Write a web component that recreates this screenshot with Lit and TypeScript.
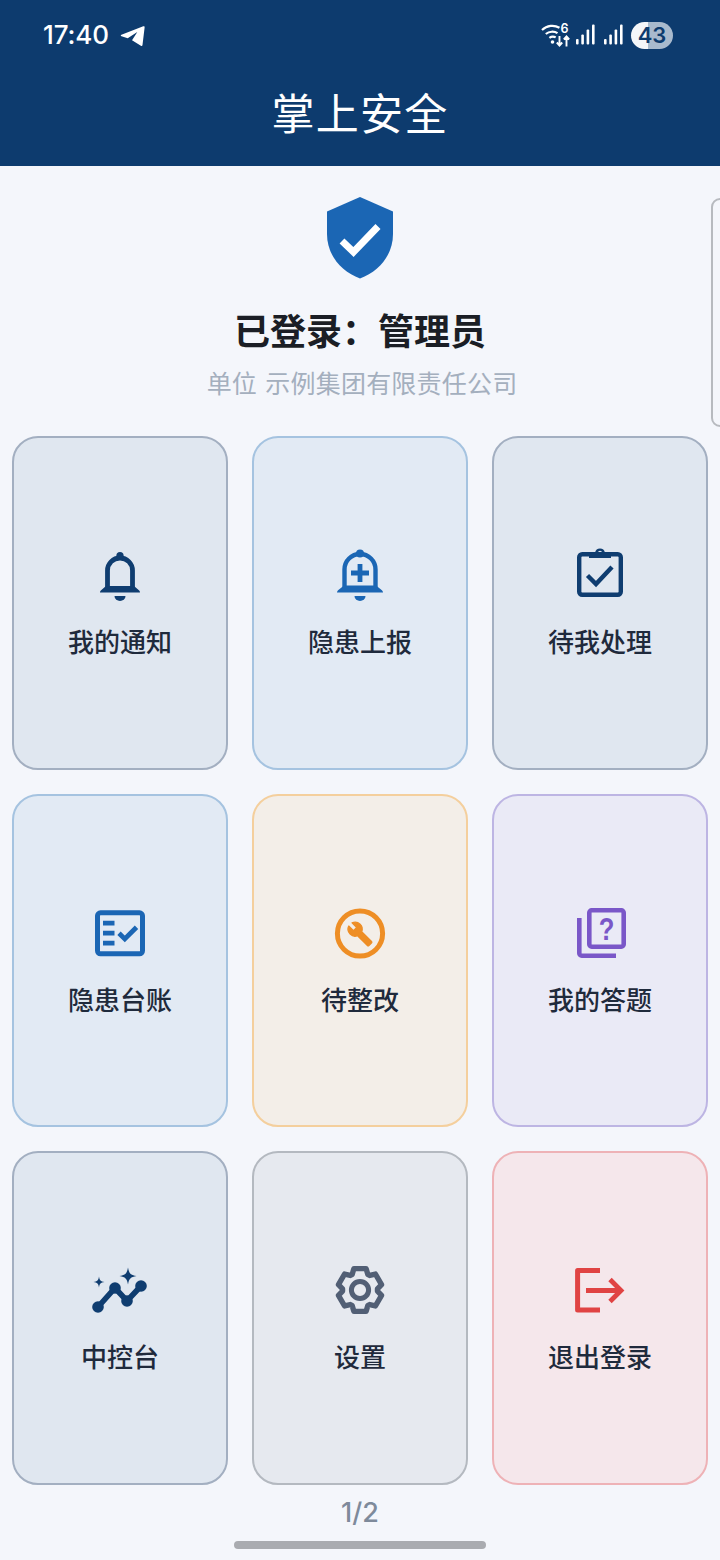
import { LitElement, html, css, svg } from "lit";
import { customElement } from "lit/decorators.js";

function gearPath(cx: number, cy: number): string {
  const pts: string[] = [];
  const teeth = 6;
  const step = (Math.PI * 2) / teeth;
  for (let i = 0; i < teeth; i++) {
    const a = -Math.PI / 2 + i * step;
    const p = (r: number, d: number) => {
      const t = a + d;
      return `${(cx + r * Math.cos(t)).toFixed(2)} ${(cy + r * Math.sin(t)).toFixed(2)}`;
    };
    pts.push(p(17.5, -0.46), p(22.2, -0.28), p(22.2, 0.28), p(17.5, 0.46));
  }
  return "M" + pts.join("L") + "Z";
}

const icons: Record<string, unknown> = {
  bell: svg`<g transform="translate(0 1)"><path d="M17.5 42V24.5a12.5 12.5 0 0 1 25 0V42" fill="none" stroke="currentColor" stroke-width="4.8"/>
    <circle cx="30" cy="9.5" r="3.6" fill="currentColor"/>
    <path d="M10 46.5c0-1 .6-1.7 1.4-2.4L16 40h28l4.6 4.1c.8.7 1.4 1.4 1.4 2.4z" fill="currentColor"/>
    <path d="M24.5 50h11a5.5 5 0 0 1-11 0z" fill="currentColor"/></g>`,
  bellPlus: svg`<g transform="translate(0 1)"><path d="M14.500 42V23.500a15.500 15.500 0 0 1 31 0V42" fill="none" stroke="currentColor" stroke-width="4.400"/>
    <circle cx="30" cy="7.500" r="4" fill="currentColor"/>
    <path d="M7 46.500c0-1 .6-1.800 1.400-2.500L14 39.500h32l5.600 4.500c.8.7 1.400 1.500 1.400 2.500z" fill="currentColor"/>
    <path d="M24.500 50h11a5.500 5 0 0 1-11 0z" fill="currentColor"/>
    <path d="M30 18v18M21 27h18" fill="none" stroke="currentColor" stroke-width="4.800"/></g>`,
  clip: svg`<rect x="9.200" y="9.200" width="41.600" height="40.600" rx="3" fill="none" stroke="currentColor" stroke-width="4.400"/>
    <path fill-rule="evenodd" d="M19 13V7.500h6.100a5 5 0 0 1 9.800 0H41V13zM30 5.700a2 2 0 1 0 0 4 2 2 0 0 0 0-4z" fill="currentColor"/>
    <path d="M17.500 30.500l8.500 8.500 16-17" fill="none" stroke="currentColor" stroke-width="4.400"/>`,
  ledger: svg`<rect x="7.500" y="9.800" width="45" height="41" rx="3" fill="none" stroke="currentColor" stroke-width="5"/>
    <path d="M13 17.800h11.500v4.600H13zM13 27.800h11.500v4.600H13zM13 37.800h11.500v4.600H13z" fill="currentColor"/>
    <path d="M29 30.300l5.800 5.600L46.500 24.300" fill="none" stroke="currentColor" stroke-width="4.800"/>`,
  wrench: svg`<circle cx="30" cy="30.500" r="22.600" fill="none" stroke="currentColor" stroke-width="5"/>
    <path d="M22.700 19l-9.100-9.100c.9-2.300.4-5-1.500-6.900-2-2-5-2.400-7.400-1.300L9 6 6 9 1.600 4.700C.4 7.100.9 10.100 2.900 12.100c1.900 1.900 4.600 2.400 6.900 1.500l9.100 9.100c.4.4 1 .4 1.400 0l2.300-2.300c.5-.4.5-1.100.1-1.400z" transform="translate(17 18) scale(1.08)" fill="currentColor" stroke="currentColor" stroke-width="1.200" stroke-linejoin="round"/>`,
  quiz: svg`<g transform="translate(0 1)"><rect x="19.300" y="6.300" width="34.400" height="36.400" rx="2.400" fill="none" stroke="currentColor" stroke-width="4.600"/>
    <path d="M9.300 14v35.300a2.400 2.400 0 0 0 2.400 2.400H46" fill="none" stroke="currentColor" stroke-width="4.600"/>
    <text x="0" y="0" transform="translate(36.500 35.500) scale(.8 1)" text-anchor="middle" font-family="Liberation Sans, sans-serif" font-size="32" font-weight="700" fill="currentColor">?</text></g>`,
  trend: svg`<g transform="translate(0 2)"><path d="M8 45L25 26l12 13 14-15" fill="none" stroke="currentColor" stroke-width="5.600"/>
    <circle cx="8" cy="45" r="5.800" fill="currentColor"/><circle cx="25" cy="26" r="5.800" fill="currentColor"/>
    <circle cx="37" cy="39" r="5.800" fill="currentColor"/><circle cx="51" cy="24" r="5.800" fill="currentColor"/>
    <path d="M38 5.500c1 5.900 2.600 7.500 8.500 8.500-5.900 1-7.500 2.600-8.500 8.500-1-5.900-2.600-7.500-8.500-8.500 5.900-1 7.500-2.600 8.500-8.500z" fill="currentColor"/>
    <path d="M9 14.500c.6 3.900 1.600 4.900 5.500 5.500-3.900.6-4.900 1.600-5.500 5.500-.6-3.900-1.600-4.900-5.500-5.500 3.900-.6 4.900-1.600 5.500-5.500z" fill="currentColor"/></g>`,
  gear: svg`<path d="${gearPath(30, 30)}" fill="none" stroke="currentColor" stroke-width="5.400" stroke-linejoin="round"/>
    <circle cx="30" cy="30" r="8.600" fill="none" stroke="currentColor" stroke-width="5"/>`,
  exit: svg`<g transform="translate(0 1)"><path d="M30 9.500H7.600V49H30" fill="none" stroke="currentColor" stroke-width="5" stroke-linejoin="round"/>
    <path d="M16 29.500h33M40 18.500l11 11-11 11" fill="none" stroke="currentColor" stroke-width="4.800"/></g>`,
};

const cards = [
  { label: "我的通知", icon: "bell", tone: "navy" },
  { label: "隐患上报", icon: "bellPlus", tone: "blue" },
  { label: "待我处理", icon: "clip", tone: "navy" },
  { label: "隐患台账", icon: "ledger", tone: "blue" },
  { label: "待整改", icon: "wrench", tone: "orange" },
  { label: "我的答题", icon: "quiz", tone: "purple" },
  { label: "中控台", icon: "trend", tone: "navy" },
  { label: "设置", icon: "gear", tone: "grey" },
  { label: "退出登录", icon: "exit", tone: "red" },
];

const who = "已登录\uFF1A管理员";

@customElement("app-root")
export class AppRoot extends LitElement {
  static styles = css`
    :host {
      display: block;
      width: 720px;
      height: 1560px;
      overflow: hidden;
      font-family: "Noto Sans CJK SC", "Noto Sans", sans-serif;
    }
    .page {
      position: relative;
      display: flex;
      flex-direction: column;
      height: 1560px;
      background: #f4f6fb;
    }
    .top {
      height: 166px;
      box-sizing: border-box;
      background: #0d3b6e;
      color: #fff;
      padding: 20px 47px 0 43px;
    }
    .status {
      display: flex;
      align-items: center;
      height: 30px;
    }
    .time {
      font-family: Inter, Roboto, sans-serif;
      font-size: 26px;
      font-weight: 500;
      line-height: 30px;
      letter-spacing: -0.1px;
    }
    .plane {
      margin-left: 11px;
      width: 25px;
      height: 24px;
    }
    .spacer {
      flex: 1;
    }
    .wifi {
      width: 30px;
      height: 26px;
      margin-right: 5px;
    }
    .sig {
      width: 20px;
      height: 22px;
      margin-right: 8px;
    }
    .sig + .sig {
      margin-right: 7px;
    }
    .batt {
      position: relative;
      width: 42px;
      height: 27px;
      border-radius: 14px;
      background: linear-gradient(90deg, #f4f6f9 0 41%, #a9bacd 41% 100%);
      color: #0d3b6e;
      font-family: Inter, Roboto, sans-serif;
      font-size: 22px;
      font-weight: 600;
      line-height: 27px;
      text-align: center;
    }
    .title {
      margin-top: 31px;
      margin-left: -43px;
      margin-right: -47px;
      text-align: center;
      font-size: 43px;
      letter-spacing: 1.2px;
      line-height: 60px;
      font-weight: 400;
    }
    .hero {
      display: flex;
      flex-direction: column;
      align-items: center;
      padding-top: 31px;
      height: 270px;
      box-sizing: border-box;
    }
    .shield {
      width: 66px;
      height: 82px;
      display: block;
    }
    .who {
      margin-top: 25px;
      font-size: 36px;
      font-weight: 700;
      line-height: 50px;
      color: #1b1e25;
    }
    .org {
      margin-top: 10px;
      margin-left: 4px;
      font-size: 25px;
      letter-spacing: 0.2px;
      word-spacing: 2.5px;
      line-height: 36px;
      color: #a4afbe;
    }
    .peek {
      position: absolute;
      left: 711px;
      top: 198px;
      width: 30px;
      height: 229px;
      box-sizing: border-box;
      border: 2px solid #b7babf;
      border-radius: 9px;
    }
    .grid {
      display: grid;
      grid-template-columns: repeat(3, 216px);
      grid-auto-rows: 333.5px;
      column-gap: 24px;
      row-gap: 24px;
      padding: 0 12px;
    }
    .card {
      box-sizing: border-box;
      border: 2px solid;
      border-radius: 26px;
      display: flex;
      flex-direction: column;
      align-items: center;
      justify-content: center;
    }
    .card svg {
      width: 60px;
      height: 60px;
      display: block;
    }
    .label {
      margin-top: 17px;
      font-size: 26px;
      font-weight: 500;
      line-height: 38px;
      color: #1f2a3c;
    }
    .navy { background: #e0e7f0; border-color: #a3afc1; }
    .navy svg { color: #0f3d70; }
    .blue { background: #e2eaf4; border-color: #a5c3e0; }
    .blue svg { color: #1b66b4; }
    .orange { background: #f3eee8; border-color: #f4cf9d; }
    .orange svg { color: #ee8e25; }
    .purple { background: #eaeaf6; border-color: #bdb5e3; }
    .purple svg { color: #7a57c8; }
    .grey { background: #e6e9ef; border-color: #b4b9c0; }
    .grey svg { color: #525f75; }
    .red { background: #f5e7eb; border-color: #eeb2b6; }
    .red svg { color: #e04343; }
    .pager {
      margin-top: 11px;
      text-align: center;
      font-family: Inter, Roboto, sans-serif;
      font-size: 27px;
      font-weight: 500;
      line-height: 34px;
      color: #7e8a9b;
    }
    .home {
      align-self: center;
      margin-top: 11.5px;
      width: 252px;
      height: 8px;
      border-radius: 4px;
      background: #a9abb0;
    }
  `;

  render() {
    return html`
      <div class="page">
        <div class="top">
          <div class="status">
            <span class="time">17:40</span>
            <svg class="plane" viewBox="0 0 26 24">
              <path d="M1.500 11.800L24.200 3c1-.4 1.500.2 1.400 1.100L23.400 22.500c-.1 1.100-.9 1.300-1.700.8L12.500 17.500 18 9 8 15.500 1.600 13.300c-1-.3-1-1.100-.1-1.500z" fill="#fff"/>
            </svg>
            <span class="spacer"></span>
            <svg class="wifi" viewBox="0 0 30 26" fill="none" stroke="#fff" stroke-width="2.200">
              <path d="M1 8C6 3.300 13 2.600 18.500 5.800M4.800 12c3.400-2.800 8.400-3 11.700-.8M8.400 15.800c1.900-1.400 4.400-1.500 6.300-.4"/>
              <circle cx="11.500" cy="20" r="1.800" fill="#fff" stroke="none"/>
              <text x="19.500" y="10.500" font-size="12.500" font-family="Inter, sans-serif" font-weight="600" fill="#fff" stroke="none">6</text>
              <path d="M18.500 14v9M15.800 20.500l2.700 3 2.700-3M25.500 24.500v-9.500M22.800 17.500l2.700-3 2.700 3" stroke-width="1.900"/>
            </svg>
            ${[0, 1].map(
              () => html`<svg class="sig" viewBox="0 0 20 22" fill="#fff">
                <rect x="0" y="15" width="2.600" height="5.500" rx="1"/>
                <rect x="5.300" y="10.500" width="2.600" height="10" rx="1"/>
                <rect x="10.600" y="5.500" width="2.600" height="15" rx="1"/>
                <rect x="16" y="0.500" width="2.600" height="20" rx="1"/>
              </svg>`
            )}
            <span class="batt">43</span>
          </div>
          <div class="title">掌上安全</div>
        </div>
        <div class="hero">
          <svg class="shield" viewBox="0 0 66 82">
            <path d="M33 0L66 14.500V37C66 58 52 74.500 33 81.500 14 74.500 0 58 0 37V14.500z" fill="#1b66b4"/>
            <path d="M15 44L26.500 55 51 29.500" fill="none" stroke="#fff" stroke-width="7"/>
          </svg>
          <div class="who">${who}</div>
          <div class="org">单位 示例集团有限责任公司</div>
        </div>
        <div class="peek"></div>
        <div class="grid">
          ${cards.map(
            (c) => html`<div class="card ${c.tone}">
              <svg viewBox="0 0 60 60">${icons[c.icon]}</svg>
              <div class="label">${c.label}</div>
            </div>`
          )}
        </div>
        <div class="pager">1/2</div>
        <div class="home"></div>
      </div>
    `;
  }
}
